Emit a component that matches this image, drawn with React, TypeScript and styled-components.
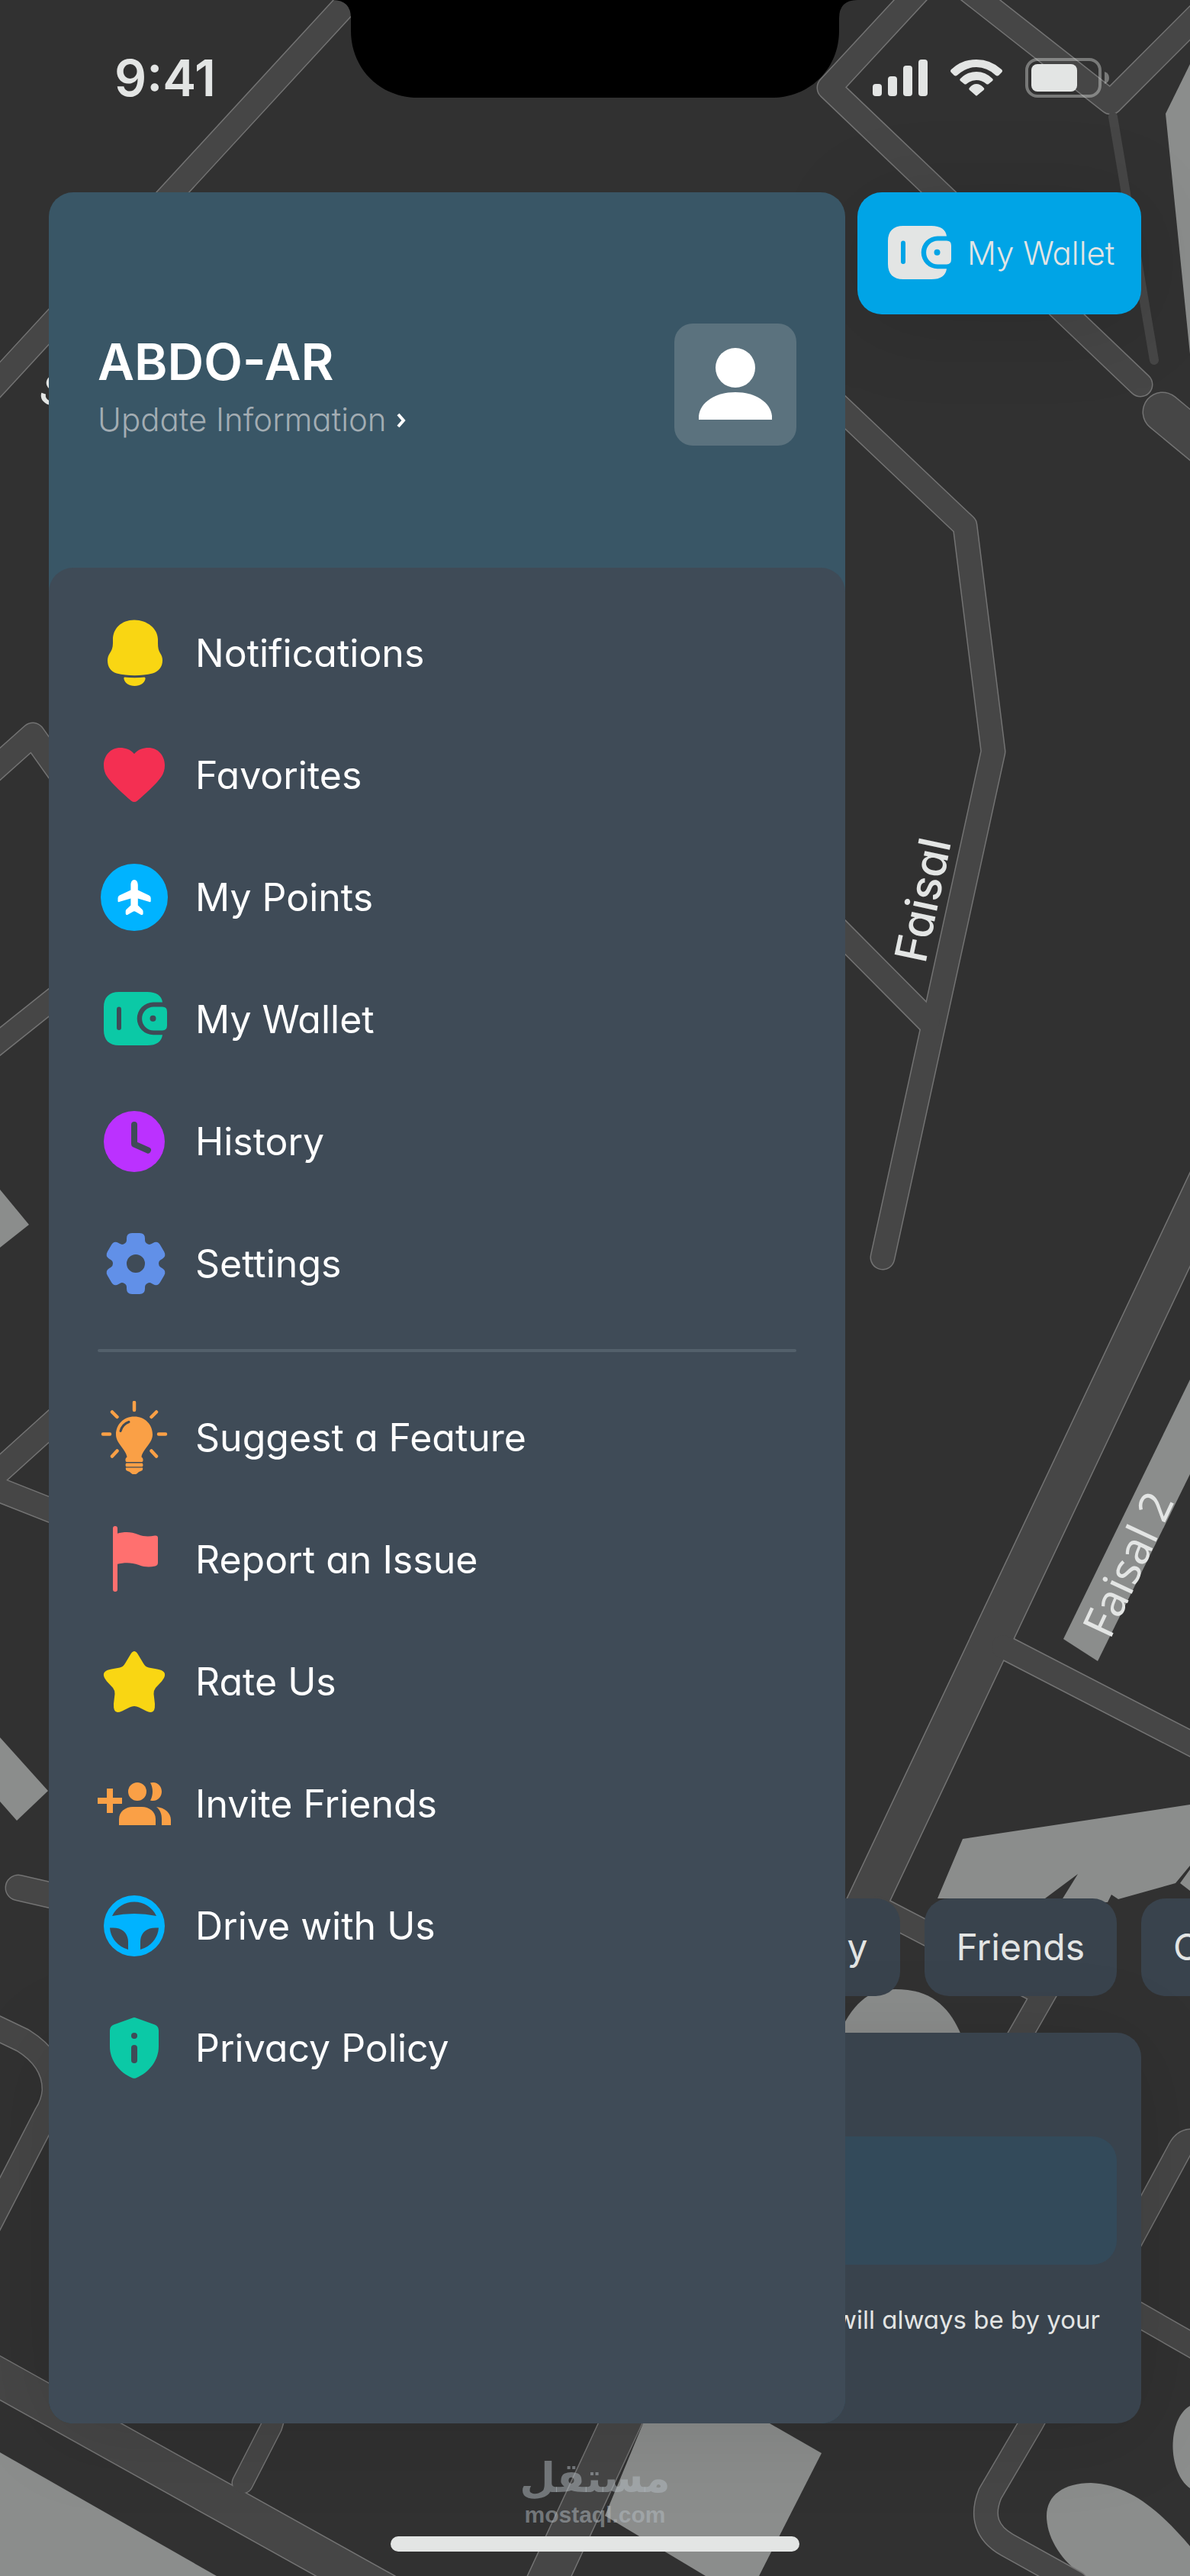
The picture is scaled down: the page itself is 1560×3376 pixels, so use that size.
import React from "react";
import styled, { createGlobalStyle } from "styled-components";

const c = {
  ground: "#313131",
  road: "#464646",
  kerb: "#737373",
  building: "#8b8d8c",
  light: "#e3e5e4",
  header: "#395666",
  sheet: "#3f4b57",
  card: "#39434d",
  field: "#334a5a",
  blue: "#00a4e6",
};

const Global = createGlobalStyle`
  *, *::before, *::after { box-sizing: border-box; }
  body {
    margin: 0;
    background: ${c.ground};
    font-family: Inter, "Open Sans", sans-serif;
    font-feature-settings: "cv11";
  }
`;

const Screen = styled.div`
  position: relative;
  display: flex;
  flex-direction: column;
  min-height: 100vh;
  overflow: hidden;
  background: ${c.ground};
`;

const MapLayer = styled.svg`
  position: absolute;
  inset: 0;
  width: 100%;
  height: 100%;
`;

const StatusBar = styled.header`
  position: relative;
  display: grid;
  grid-template-columns: 1fr 688px 1fr;
  height: 252px;
  align-items: start;
`;

const StatusCell = styled.div<{ $start: number }>`
  display: flex;
  align-items: center;
  gap: 30px;
  height: 204px;
  padding-left: ${(p) => p.$start}px;
`;

const Time = styled.time`
  font-size: 66px;
  line-height: 84px;
  font-weight: 600;
  color: ${c.light};
`;

const Content = styled.main`
  position: relative;
  display: flex;
  flex-direction: column;
  flex: 1;
  margin: 0 64px;
`;

const WalletButton = styled.button`
  align-self: flex-end;
  display: flex;
  align-items: center;
  gap: 16px;
  width: 372px;
  height: 160px;
  padding: 0 32px;
  border: 0;
  border-radius: 32px;
  background: ${c.blue};
  color: ${c.light};
  font: inherit;
  font-size: 42px;
  font-weight: 300;
  line-height: 68px;
  white-space: nowrap;
  box-shadow: 0 12px 120px rgba(0, 0, 0, 0.12);
`;

const Chips = styled.div`
  display: flex;
  justify-content: flex-end;
  gap: 32px;
  margin: auto -252px 48px 0;
`;

const Chip = styled.button`
  flex: none;
  min-width: 252px;
  height: 128px;
  padding: 0 42px;
  border: 0;
  border-radius: 32px;
  background: ${c.card};
  color: ${c.light};
  font: inherit;
  font-size: 48px;
  line-height: 72px;
  text-align: left;
  white-space: nowrap;
`;

const RideCard = styled.section`
  height: 512px;
  padding: 136px 32px 0;
  border-radius: 32px;
  background: ${c.card};
  box-shadow: 0 12px 120px rgba(0, 0, 0, 0.12);
`;

const SearchField = styled.input`
  display: block;
  width: 100%;
  height: 168px;
  border: 0;
  border-radius: 32px;
  background: ${c.field};
`;

const Motto = styled.p`
  margin: 48px 22px 0;
  font-size: 33px;
  line-height: 48px;
  text-align: right;
  color: ${c.light};
`;

const Drawer = styled.aside`
  position: absolute;
  inset: 0 388px 0 0;
  display: flex;
  flex-direction: column;
  border-radius: 32px;
  overflow: hidden;
  background: ${c.header};
`;

const Profile = styled.div`
  display: flex;
  align-items: center;
  justify-content: space-between;
  padding: 172px 64px 160px;
`;

const Identity = styled.div`
  padding-top: 8px;
`;

const Name = styled.h1`
  margin: 0;
  font-size: 66px;
  line-height: 84px;
  font-weight: 600;
  color: #fff;
`;

const UpdateLink = styled.a`
  display: flex;
  align-items: center;
  gap: 12px;
  font-size: 42px;
  line-height: 68px;
  font-weight: 300;
  color: #a3adb3;
  text-decoration: none;
`;

const Avatar = styled.svg`
  width: 160px;
  height: 160px;
  border-radius: 24px;
  background: #5b727e;
`;

const Sheet = styled.nav`
  flex: 1;
  padding: 64px;
  border-radius: 32px;
  background: ${c.sheet};
`;

const Menu = styled.ul`
  display: flex;
  flex-direction: column;
  gap: 64px;
  margin: 0;
  padding: 0;
  list-style: none;
`;

const MenuLink = styled.a`
  display: flex;
  align-items: center;
  gap: 32px;
  height: 96px;
  font-size: 50px;
  line-height: 72px;
  color: #fff;
  text-decoration: none;
`;

const Divider = styled.hr`
  height: 4px;
  margin: 64px 0;
  border: 0;
  border-radius: 2px;
  background: #53606b;
`;

const IconBox = styled.svg`
  flex: none;
  width: 96px;
  height: 96px;
`;

const HomeArea = styled.footer`
  position: relative;
  display: flex;
  flex-direction: column;
  align-items: center;
  height: 200px;
  padding-top: 40px;
`;

const Mark = styled.div`
  display: flex;
  flex-direction: column;
  align-items: center;
  color: rgba(180, 188, 194, 0.5);
  font-family: "Liberation Sans", sans-serif;
  font-weight: 700;
`;

const MarkArabic = styled.span`
  font-family: "DejaVu Sans", sans-serif;
  font-size: 54px;
  line-height: 64px;
`;

const MarkLatin = styled.span`
  font-size: 30px;
  line-height: 32px;
`;

const HomeIndicator = styled.div`
  width: 536px;
  height: 20px;
  margin-top: 12px;
  border-radius: 10px;
  background: ${c.light};
`;

/* ---------- icons, all on a 96 unit grid ---------- */

const Icon = ({ children }: { children: React.ReactNode }) => (
  <IconBox viewBox="0 0 96 96" aria-hidden="true">
    {children}
  </IconBox>
);

const Bell = () => (
  <Icon>
    <g fill="#f9d613">
      <path d="M48 4.5C31 4.5 20 16 20 30V35C20 41 18 45 16 48C14 51 13 54 13 57.5C13 66 17 72 25 74.5C40 78 57 78 72 74.5C80 72 85 66 85 57.5C85 54 84 51 82 48C80 45 79 41 79 35V30C79 16 65 4.5 48 4.5Z" />
      <path d="M35 79.500C44 80.500 53 80.500 61.500 79.500Q63 80 62.500 82C61 87.500 56 91 48.500 91C41 91 36 87.500 34.500 82Q34 80 35 79.500Z" />
    </g>
  </Icon>
);

const Heart = () => (
  <Icon>
    <path
      fill="#f42f52"
      d="M48 20C43 14 36 12 29.500 12C17 12 8 22 8 35C8 43 11 49 16 54.500C22 62 33 72 44 81.500Q48 84.500 52 81.500C63 72 74 62 80 54.500C85 49 88 43 88 35C88 22 79 12 66.500 12C60 12 53 14 48 20Z"
    />
  </Icon>
);

const Points = () => (
  <Icon>
    <circle cx="48" cy="48" r="44" fill="#00b3ff" />
    <path
      fill="#fff"
      d="M48 25C45 25 43.400 28 43.400 32V38.500L28.500 45.500Q26.500 46.500 26.500 49V53Q26.500 54.500 28 54L43.400 49.500V58.500L37.500 64Q36.500 65 36.700 67V69.500Q37 71.500 39 71L46 67Q48 65.500 50 67L57 71Q59.500 71.500 59.600 69.500V67Q59.700 65 58.500 64L52.800 58.500V49.500L68 54Q69.700 54.500 69.700 53V49Q69.700 46.500 67.500 45.500L52.800 38.500V32C52.800 28 51 25 48 25Z"
    />
  </Icon>
);

const Wallet = ({ color = "#0bc9a6" }: { color?: string }) => (
  <Icon>
    <g fill={color} fillRule="evenodd">
      <path d="M28 12H65C77 12 84 17 85 25.600H73A21.300 21.300 0 0 0 73 68.200H85C84 77 77 82 65 82H28C15 82 8 75 8 62V32C8 19 15 12 28 12ZM28 31.600Q25 31.600 25 35V59Q25 62 28 62Q31 62 31 59V35Q31 31.600 28 31.600Z" />
      <path d="M73.500 31.600H85Q91 31.600 91 38V56Q91 62.400 85 62.400H73.500A15.400 15.400 0 0 1 73.500 31.600ZM72.500 42.800A4 4 0 1 0 72.500 50.800A4 4 0 1 0 72.500 42.800Z" />
    </g>
  </Icon>
);

const Clock = () => (
  <Icon>
    <circle cx="48" cy="48" r="40" fill="#bb31ff" />
    <path d="M48 26V51.500L66 59.500" fill="none" stroke={c.sheet} strokeWidth="8" strokeLinecap="round" strokeLinejoin="round" />
  </Icon>
);

const gearPath = (() => {
  const at = (u: number, v: number, a: number) => {
    const x = 50 + u * Math.cos(a) + v * Math.sin(a);
    const y = 48 + u * Math.sin(a) - v * Math.cos(a);
    return `${x.toFixed(1)} ${y.toFixed(1)}`;
  };
  let d = "";
  for (let i = 0; i < 6; i++) {
    const a = (i * Math.PI) / 3;
    d += `${i ? "L" : "M"}${at(-15, 26, a)}Q${at(-12, 27.7, a)} ${at(-12, 31, a)}L${at(-12, 33, a)}Q${at(-12, 40, a)} ${at(-5, 40, a)}L${at(5, 40, a)}Q${at(12, 40, a)} ${at(12, 33, a)}L${at(12, 31, a)}Q${at(12, 27.7, a)} ${at(15, 26, a)}`;
  }
  return d + "ZM50 36A12 12 0 1 0 50 60A12 12 0 1 0 50 36Z";
})();

const Gear = () => (
  <Icon>
    <path fill="#6190e8" fillRule="evenodd" d={gearPath} />
  </Icon>
);

const Bulb = () => (
  <Icon>
    <path
      d="M48 2V12M7 43.500H16M80 43.500H89M19 14.500L25.500 21M77 14.500L70.500 21M25.500 65.500L19 72.500M70.500 65.500L77 72.500"
      stroke="#faa046"
      strokeWidth="4.500"
      strokeLinecap="round"
    />
    <path
      fill="#faa046"
      d="M48 20.500C34 20.500 24 31 24 44C24 56 37 63 38.500 73.500Q36 75 36.500 78Q36.500 80 38 80H58Q59.500 80 59.500 78Q60 75 57.500 73.500C59 63 72 56 72 44C72 31 62 20.500 48 20.500ZM37.500 81.500H58.500Q60.500 84 58.500 86.200H37.500Q35.500 84 37.500 81.500ZM37 87.500H59Q60 91 56.500 92L54 93Q51 96.500 48 96.500Q45 96.500 42 93L39.500 92Q36 91 37 87.500Z"
    />
    <path d="M30 39.500Q32.500 30.500 41 27.500" fill="none" stroke={c.sheet} strokeWidth="3" strokeLinecap="round" />
  </Icon>
);

const Flag = () => (
  <Icon>
    <rect x="20" y="4" width="6" height="86" rx="3" fill="#ff706f" />
    <path fill="#ff706f" d="M25 14C36 11 44 11.500 53 15C61 18 67 18 75 16.500Q79 16 79 19.500V52Q79 55.500 75.500 56.500C68 58 62 58 54 55C44 51.500 36 51.500 25 54Z" />
  </Icon>
);

const Star = () => (
  <Icon>
    <path
      fill="#f9d613"
      d="M48 8Q51 8 54 14L60 24Q62.500 28.500 67 29.500L78 31.500C87 33 90 37 87 43L84 47.500L76 56Q73 60 73.500 64L75 77Q75.500 88 70 88Q67.500 88 64 86.500L54 81.500Q48 78.500 42 81.500L32 86.500Q28.500 88 26 88Q20.500 88 21 77L22.500 64Q23 60 20 56L12 47.500L9 43C6 37 9 33 18 31.500L29 29.500Q33.500 28.500 36 24L42 14Q45 8 48 8Z"
    />
  </Icon>
);

const Invite = () => (
  <Icon>
    <g fill="#faa046">
      <path d="M12 28H20V40H32V48H20V60H12V48H0V40H12Z" />
      <circle cx="52" cy="32" r="12" />
      <path d="M69 20.500C78 18 84 25 84 32C84 39 78 46 69 43.500C73 37 73 27 69 20.500Z" />
      <path d="M28 76V68C28 58 37 52 46 52H58C67 52 76 58 76 68V76Z" />
      <path d="M77 52C88 53 96 60 96 69V76H84V68C84 61 82 56 77 52Z" />
    </g>
  </Icon>
);

const Wheel = () => (
  <Icon>
    <path
      fill="#00b3ff"
      fillRule="evenodd"
      d="M48 8A40 40 0 1 0 48 88A40 40 0 1 0 48 8ZM19 35A32 32 0 0 1 77 35Q48 29 19 35ZM16 50.500H20C33 50.500 40 58 40 69V79A32 32 0 0 1 16 50.500ZM80 50.500H76C63 50.500 56 58 56 69V79A32 32 0 0 0 80 50.500Z"
    />
  </Icon>
);

const Shield = () => (
  <Icon>
    <path
      fill="#0bc9a6"
      d="M46 8.500Q48 7.700 50 8.500L75 17.500Q80 19.500 80 25V46C80 64 68 80 50 87.500Q48 88 46 87.500C28 80 16 64 16 46V25Q16 19.500 21 17.500Z"
    />
    <circle cx="48" cy="32" r="4" fill={c.sheet} />
    <rect x="44" y="44" width="8" height="24" rx="4" fill={c.sheet} />
  </Icon>
);

const primary = [
  { label: "Notifications", icon: <Bell /> },
  { label: "Favorites", icon: <Heart /> },
  { label: "My Points", icon: <Points /> },
  { label: "My Wallet", icon: <Wallet /> },
  { label: "History", icon: <Clock /> },
  { label: "Settings", icon: <Gear /> },
];

const secondary = [
  { label: "Suggest a Feature", icon: <Bulb /> },
  { label: "Report an Issue", icon: <Flag /> },
  { label: "Rate Us", icon: <Star /> },
  { label: "Invite Friends", icon: <Invite /> },
  { label: "Drive with Us", icon: <Wheel /> },
  { label: "Privacy Policy", icon: <Shield /> },
];

const MenuList = ({ items }: { items: typeof primary }) => (
  <Menu>
    {items.map((item) => (
      <li key={item.label}>
        <MenuLink href="#">
          {item.icon}
          {item.label}
        </MenuLink>
      </li>
    ))}
  </Menu>
);

/* ---------- street map ---------- */

const roads: { d: string; w: number }[] = [
  { d: "M500 -45L-50 552", w: 32 },
  { d: "M1212 -20L1087 115L1495 504", w: 32 },
  { d: "M1260 -20L1456 134L1600 -10", w: 32 },
  { d: "M1524 540L1600 603", w: 52 },
  { d: "M1060 495L1265 689L1302 985L1157 1648", w: 32 },
  { d: "M1060 1180L1217 1338", w: 32 },
  { d: "M1606 1501L1100 2571", w: 53 },
  { d: "M1315 2158L1600 2305", w: 32 },
  { d: "M1150 2500L1362 2610", w: 32 },
  { d: "M1250 2820L1396 2565", w: 32 },
  { d: "M1600 2812L1562 2806Q1552 2806 1546 2818L1352 3176L1298 3268Q1280 3312 1320 3335L1410 3385", w: 32 },
  { d: "M1450 3009L1600 3095", w: 32 },
  { d: "M840 3118L710 3398", w: 53 },
  { d: "M-60 3083L520 3406", w: 51 },
  { d: "M380 3100L356 3180L318 3254", w: 28 },
  { d: "M-40 1037L43 963L80 1015", w: 32 },
  { d: "M-40 1397L104 1282", w: 29 },
  { d: "M104 1833L-20 1945L104 1994", w: 32 },
  { d: "M24 2474L120 2496", w: 34 },
  { d: "M-20 2650L30 2674Q72 2700 71 2740Q70 2756 60 2772L-20 2927", w: 32 },
];

const buildings = [
  "M1560 84L1528 149L1560 464Z",
  "M1560 1808L1394 2148L1439 2177L1560 1932Z",
  "M1262 2410L1560 2365V2445L1541 2468L1466 2489L1457 2483L1452 2493H1390L1413 2456L1370 2488H1229Z",
  "M1547 2468L1560 2450V2478Z",
  "M1100 2665C1125 2612 1150 2604 1190 2608C1230 2613 1250 2640 1262 2672V2700H1100Z",
  "M1560 3153C1530 3170 1530 3240 1560 3261Z",
  "M1372 3297C1372 3270 1395 3254 1430 3254C1480 3256 1520 3290 1560 3337V3376H1420C1390 3355 1372 3325 1372 3297Z",
  "M843 3176H1009L1077 3215L995 3376H925L793 3297Z",
  "M0 3214L284 3376H0Z",
  "M0 1559L38 1605L0 1635Z",
  "M0 2277L63 2347L22 2386L0 2361Z",
];

const StreetMap = () => (
  <MapLayer viewBox="0 0 1560 3376" preserveAspectRatio="xMidYMin slice" aria-label="Map">
    <g fill={c.building}>
      {buildings.map((d) => (
        <path key={d} d={d} />
      ))}
    </g>
    <g fill="none" strokeLinecap="round" strokeLinejoin="round">
      {roads.map((r) => (
        <path key={r.d} d={r.d} stroke={c.kerb} strokeWidth={r.w + 1} />
      ))}
      <path d="M1459 153L1513 472" stroke={c.road} strokeWidth="12" />
      {roads.map((r) => (
        <path key={r.d} d={r.d} stroke={c.road} strokeWidth={r.w - 2} />
      ))}
    </g>
    <g fill={c.light} fontFamily="Inter, sans-serif">
      <text x="1213" y="1264" fontSize="58" fontWeight="500" transform="rotate(-78 1213 1264)">
        Faisal
      </text>
      <text x="1455" y="2150" fontSize="58" fontFamily="Noto Sans, sans-serif" transform="rotate(-65 1455 2150)">
        Faisal 2
      </text>
      <text x="48" y="524" fontSize="54" fontWeight="500" transform="rotate(20 48 524)">
        S
      </text>
    </g>
  </MapLayer>
);

export default function App() {
  return (
    <>
      <Global />
      <Screen>
        <StreetMap />
        <StatusBar>
          <StatusCell $start={150}>
            <Time>9:41</Time>
          </StatusCell>
          <svg width="688" height="128" viewBox="0 0 688 128" aria-hidden="true">
            <path d="M0 0Q24 0 24 24V40C24 90 62 128 112 128H576C626 128 664 90 664 40V24Q664 0 688 0Z" />
          </svg>
          <StatusCell $start={20}>
            <svg width="72" height="48" fill={c.light} aria-label="Signal">
              <rect y="32" width="12" height="16" rx="4" />
              <rect x="20" y="22" width="12" height="26" rx="4" />
              <rect x="40" y="8" width="12" height="40" rx="4" />
              <rect x="60" width="12" height="48" rx="4" />
            </svg>
            <svg width="68" height="48" fill={c.light} aria-label="Wi-Fi">
              <path d="M1 13Q-1 15 1 17L5 21Q7 22 9 20.500Q20 10 34 10Q48 10 59 20.500Q61 22 63 21L67 17Q69 15 67 13Q53 0 34 0Q15 0 1 13Z" />
              <path d="M13 25Q11.500 26.500 13 28L18 32Q19.500 33 21 32Q27 27 34 27Q41 27 47 32Q48.500 33 50 32L55 28Q56.500 26.500 55 25Q46 16 34 16Q22 16 13 25Z" />
              <path d="M25 37Q23.500 38.500 25 40L33 47Q34 48 35 47L43.500 40Q45 38.500 43.500 37Q39 32 34 32Q29 32 25 37Z" />
            </svg>
            <svg width="110" height="52" fill={c.light} aria-label="Battery">
              <rect x="2" y="2" width="96" height="48" rx="14" fill="none" stroke={c.light} strokeWidth="4" opacity="0.4" />
              <rect x="8" y="8" width="60" height="36" rx="8" />
              <path d="M104 18Q110 20 110 26Q110 32 104 34Z" opacity="0.4" />
            </svg>
          </StatusCell>
        </StatusBar>
        <Content>
          <WalletButton type="button">
            <Wallet color={c.light} />
            My Wallet
          </WalletButton>
          <Chips>
            <Chip type="button">My Family</Chip>
            <Chip type="button">Friends</Chip>
            <Chip type="button">Coffee</Chip>
          </Chips>
          <RideCard>
            <SearchField type="text" aria-label="Destination" />
            <Motto>will always be by your</Motto>
          </RideCard>
          <Drawer>
            <Profile>
              <Identity>
                <Name>ABDO-AR</Name>
                <UpdateLink href="#">
                  Update Information
                  <svg width="14" height="22" viewBox="0 0 14 22" aria-hidden="true">
                    <path d="M3 4L10 12L3 20" fill="none" stroke="#fff" strokeWidth="4" />
                  </svg>
                </UpdateLink>
              </Identity>
              <Avatar viewBox="0 0 160 160" role="img" aria-label="Profile picture">
                <circle cx="80" cy="58" r="26" fill="#fff" />
                <path d="M32 126V121C34 103 54 90 80 90C106 90 126 103 128 121V126Z" fill="#fff" />
              </Avatar>
            </Profile>
            <Sheet>
              <MenuList items={primary} />
              <Divider />
              <MenuList items={secondary} />
            </Sheet>
          </Drawer>
        </Content>
        <HomeArea>
          <Mark>
            <MarkArabic lang="ar">مستقل</MarkArabic>
            <MarkLatin>mostaql.com</MarkLatin>
          </Mark>
          <HomeIndicator />
        </HomeArea>
      </Screen>
    </>
  );
}
